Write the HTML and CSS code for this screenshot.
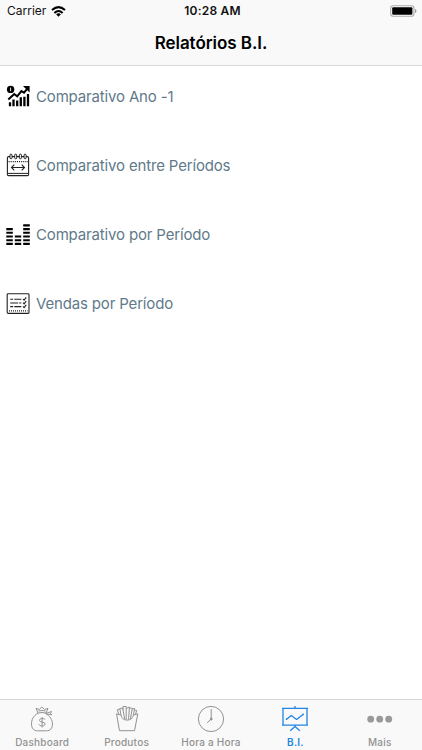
FILE: index.html
```html
<!DOCTYPE html>
<html lang="pt-BR">
<head>
<meta charset="utf-8">
<title>Relatórios B.I.</title>
<link rel="stylesheet" href="styles.css">
</head>
<body>
<div class="app">
  <header class="header">
    <div class="status">
      <div class="carrier"><span>Carrier</span>
        <svg width="15" height="11" viewBox="0 0 15 11" fill="none" stroke="#000" stroke-width="2"><path d="M1 4.1Q7.5-1.8 14 4.1M3.4 6.9Q7.5 3.1 11.6 6.9"/><path d="M5.1 8.2Q7.5 6.3 9.9 8.2L7.5 10.8Z" fill="#000" stroke="none"/></svg>
      </div>
      <div class="time">10:28 AM</div>
      <div class="battery">
        <svg width="27" height="12" viewBox="0 0 27 12"><rect x=".7" y=".7" width="23.2" height="10.6" rx="2.6" fill="#fff" stroke="#aaa" stroke-width="1.1"/><rect x="2.2" y="2.2" width="20.2" height="7.6" rx="1" fill="#000"/><path d="M25 4v4q1.5-.5 1.5-2t-1.5-2" fill="#999"/></svg>
      </div>
    </div>
    <h1 class="title">Relatórios B.I.</h1>
  </header>
  <main class="list">
    <a class="row">
      <svg class="icon" viewBox="0 0 24 24" fill="none" stroke="#000"><circle cx="4.6" cy="5.4" r="3.7" fill="#000" stroke="none"/><path d="M4.6 3.6v3.6" stroke="#fff" stroke-width=".9"/><path d="M2.3 15.6 8.2 10l3 2.3 4.2-5.2 2.6 1.5L22 3.9" stroke-width="2"/><path d="M17 2h6.6v6.4Z" fill="#000" stroke="none"/><path d="M4 18.2V22.2M7.5 15.6V22.2M11.2 16.6V22.2M14.8 13.3V22.2M18.4 12.8V22.2M22 10V22.2" stroke-width="2.3"/></svg>
      <span class="label">Comparativo Ano -1</span>
    </a>
    <a class="row">
      <svg class="icon" viewBox="0 0 24 24" fill="none" stroke="#222" stroke-width="1.1"><rect x="1.4" y="3.6" width="21.2" height="19" rx="1.2"/><path d="M2.5 8.6h19.5" stroke-width="1.2" stroke-dasharray="1.1 1"/><path d="M2 20.4h20" stroke-width="1"/><g fill="#fff" stroke-width="1"><rect x="4" y="1.1" width="2" height="4.7" rx="1"/><rect x="8.7" y="1.1" width="2" height="4.7" rx="1"/><rect x="13.4" y="1.1" width="2" height="4.7" rx="1"/><rect x="18.1" y="1.1" width="2" height="4.7" rx="1"/></g><path d="M5.5 14.5h13M8.3 11.7l-2.8 2.8 2.8 2.8M15.7 11.7l2.8 2.8-2.8 2.8"/></svg>
      <span class="label">Comparativo entre Períodos</span>
    </a>
    <a class="row">
      <svg class="icon" viewBox="0 0 24 24" stroke="#000" stroke-width="2.1"><path d="M.3 7.1h6.5M.3 10.8h6.5M.3 14.5h6.5M.3 18.2h6.5M.3 21.9h6.5M8.8 14.5h6.4M8.8 18.2h6.4M8.8 21.9h6.4M17.2 3.4h6.6M17.2 7.1h6.6M17.2 10.8h6.6M17.2 14.5h6.6M17.2 18.2h6.6M17.2 21.9h6.6"/></svg>
      <span class="label">Comparativo por Período</span>
    </a>
    <a class="row">
      <svg class="icon" viewBox="0 -.6 24 24" fill="none" stroke="#222" stroke-width="1.1"><rect x="1.2" y="2.2" width="21.8" height="19.6" rx=".9"/><path d="M4.2 7.7h3M8.3 7.7h7M4.2 11.4h8M13.2 11.4h2.1M4.2 15h3M8.3 15h7M17 7.4l1.1 1.2 2.1-2.8M17 11.1l1.1 1.2 2.1-2.8M17 14.8l1.1 1.2 2.1-2.8"/><path d="M3 19.2h18.5" stroke-width="1.3" stroke-dasharray="1 1"/></svg>
      <span class="label">Vendas por Período</span>
    </a>
  </main>
  <nav class="tabs">
    <a class="tab">
      <svg viewBox="0 0 28 28"><path d="M10 8.2C5 11 3.5 15 3.5 19c0 4.5 2.5 6.8 6 6.8h9c3.7 0 6-2.5 6-6.8 0-4-2.5-8-7.2-10.8M9.5 8.2q4.5-1.4 9 0M10 8 8 3.3l3.2 1.2L13.8 2l2.8 2.5L20 3.3 18 8M10.5 6q3.5-1 7 0M18 8.5l5.5-2-1 2 1.5 1.3-5.5-.8"/><path d="M17 14.5c-.5-1.3-5.5-1.6-5.5.8 0 2.6 5.6 1.1 5.6 3.8 0 2.4-5.3 2.3-6.1.3M14.1 12v10.5"/></svg>
      <span>Dashboard</span>
    </a>
    <a class="tab">
      <svg viewBox="0 0 28 28"><path d="m3.5 8.8 3 16.9h15l3.3-16.9-4.5 1.4q-1.2 4.9-6.2 4.9t-6-4.9ZM8 10 6.8 3.5l2.9-.5 2 11M5.8 9.2 4.3 4.8l2.5-.7M10 5V1.5h3.2v13M13.2 3.5l3.2-1.5-.8 12.8M16.4 3l2.9.3-1.9 10.7M19.1 4l2.5-.5-1.2 6.5M21.3 5l2.4.4-1.1 3.6"/></svg>
      <span>Produtos</span>
    </a>
    <a class="tab">
      <svg viewBox="0 0 28 28"><circle cx="14" cy="14" r="12.6"/><path d="M14.2 4v9.8L10 18.2"/><circle cx="14.2" cy="14" r="1" fill="currentColor"/></svg>
      <span>Hora a Hora</span>
    </a>
    <a class="tab active">
      <svg viewBox="0 0 28 28"><path d="M1 3.3h26M2 3.5v16.7M26 3.5v16.7M1 20.2h26M14 1v2M14 20.5v2M14 21.5l-4.8 4.3M14 21.5l4.8 4.3" stroke-width="1.3"/><path d="m5.5 14.2 4.8-3.8 5.3 4 6.4-5" stroke-width="1.3"/><path d="M4.8 14.2h1.4M21.4 9.4h1.4" stroke-width="1.6"/></svg>
      <span>B.I.</span>
    </a>
    <a class="tab">
      <svg viewBox="0 0 28 28"><g fill="#999" stroke="none"><circle cx="4.7" cy="14.2" r="3.4"/><circle cx="13.7" cy="14.2" r="3.4"/><circle cx="22.7" cy="14.2" r="3.4"/></g></svg>
      <span>Mais</span>
    </a>
  </nav>
</div>
</body>
</html>
```
FILE: styles.css
```css
* { box-sizing: border-box; }
body { margin: 0; background: #fff; font-family: Inter, "Liberation Sans", sans-serif; }
.app { height: 750px; display: flex; flex-direction: column; }
.header { height: 66px; background: #f9f9f9; border-bottom: 1px solid #d8d8d8; }
.status { height: 22px; display: grid; grid-template-columns: 1fr auto 1fr; align-items: center; padding: 0 5px 0 7px; font-size: 12px; line-height: 22px; color: #111; }
.carrier { display: flex; align-items: center; gap: 5px; }
.time { font-weight: 600; letter-spacing: 0.2px; padding-left: 1px; }
.battery { display: flex; justify-content: flex-end; }
.title { margin: 0; text-align: center; font-size: 17px; font-weight: 600; line-height: 43px; letter-spacing: -0.05px; color: #000; }
.list { flex: 1; padding: 18px 6px 0; }
.row { display: flex; align-items: center; gap: 6px; height: 24px; margin-bottom: 45px; }
.icon { width: 24px; height: 24px; flex: none; }
.label { padding-top: 2px; font-size: 15px; line-height: 24px; color: #5f7a8a; white-space: nowrap; letter-spacing: -0.16px; }
.tabs { height: 51px; display: grid; grid-template-columns: repeat(5, 1fr); background: #f9f9f9; border-top: 1px solid #d6d6d6; }
.tab { display: flex; flex-direction: column; align-items: center; padding-top: 5px; color: #929292; font-size: 10px; font-weight: 500; line-height: 14px; letter-spacing: 0.22px; }
.tab svg { width: 28px; height: 28px; margin-bottom: 2px; fill: none; stroke: currentColor; stroke-width: 1; stroke-linejoin: round; }
.active { color: #2185e2; font-weight: 600; }
```
